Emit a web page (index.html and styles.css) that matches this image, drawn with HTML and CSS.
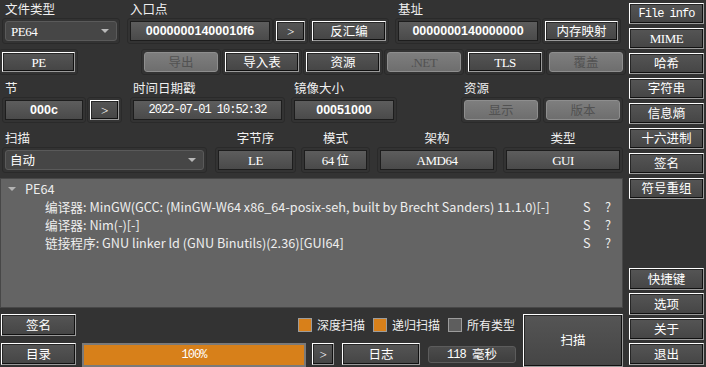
FILE: index.html
```html
<!DOCTYPE html>
<html><head><meta charset="utf-8"><link rel="stylesheet" href="styles.css"></head>
<body>
<div class="app">
  <div class="main">
    <div class="row row-a">
      <div class="col ml2"><div class="lbl">文件类型</div><div class="fr"><div class="combo w112"><span class="serif">PE64</span><span class="arrow"></span></div></div></div>
      <div class="col ml7"><div class="lbl">入口点</div><div class="fr"><div class="field num w140">00000001400010f6</div></div></div>
      <div class="fr"><div class="btn serif w29">&gt;</div></div>
      <div class="fr ml1"><div class="btn w74">反汇编</div></div>
      <div class="col ml6"><div class="lbl">基址</div><div class="fr"><div class="field num w140">0000000140000000</div></div></div>
      <div class="fr ml1"><div class="btn w73">内存映射</div></div>
    </div>
    <div class="row row-b">
      <div class="fr mlm1"><div class="btn serif w73">PE</div></div>
      <div class="fr ml63"><div class="btn dis w74">导出</div></div>
      <div class="fr ml1"><div class="btn w74">导入表</div></div>
      <div class="fr ml1"><div class="btn w74">资源</div></div>
      <div class="fr ml1"><div class="btn dis serif w74">.NET</div></div>
      <div class="fr ml1"><div class="btn serif w74">TLS</div></div>
      <div class="fr ml1"><div class="btn dis w74">覆盖</div></div>
    </div>
    <div class="row row-c">
      <div class="col ml2"><div class="lbl">节</div><div class="fr"><div class="field num w78">000c</div></div></div>
      <div class="fr ml1"><div class="btn serif w29">&gt;</div></div>
      <div class="col ml8"><div class="lbl">时间日期戳</div><div class="fr"><div class="field mono w149">2022-07-01 10:52:32</div></div></div>
      <div class="col ml6"><div class="lbl">镜像大小</div><div class="fr"><div class="field num w100">00051000</div></div></div>
      <div class="col ml64"><div class="lbl">资源</div>
        <div class="pair"><div class="fr"><div class="btn dis w74">显示</div></div><div class="fr ml2"><div class="btn dis w74">版本</div></div></div>
      </div>
    </div>
    <div class="row row-d">
      <div class="col ml2"><div class="lbl">扫描</div><div class="fr"><div class="combo w199"><span class="cjk">自动</span><span class="arrow"></span></div></div></div>
      <div class="col ml8"><div class="lbl c">字节序</div><div class="fr"><div class="field serif w75">LE</div></div></div>
      <div class="col ml5"><div class="lbl c">模式</div><div class="fr"><div class="field w63"><span class="serif">64&nbsp;</span><span class="cjk">位</span></div></div></div>
      <div class="col ml7"><div class="lbl c">架构</div><div class="fr"><div class="field serif w114">AMD64</div></div></div>
      <div class="col ml6"><div class="lbl c">类型</div><div class="fr"><div class="field serif w114">GUI</div></div></div>
    </div>
    <div class="tree">
      <div class="ti head"><span class="tri"></span><span class="tt">PE64</span></div>
      <div class="ti child"><span class="tt">编译器: MinGW(GCC: (MinGW-W64 x86_64-posix-seh, built by Brecht Sanders) 11.1.0)[-]</span><span class="s">S</span><span class="q">?</span></div>
      <div class="ti child"><span class="tt">编译器: Nim(-)[-]</span><span class="s">S</span><span class="q">?</span></div>
      <div class="ti child"><span class="tt">链接程序: GNU linker ld (GNU Binutils)(2.36)[GUI64]</span><span class="s">S</span><span class="q">?</span></div>
    </div>
    <div class="bottom">
      <div class="bl">
        <div class="brow r1">
          <div class="btn bb w75">签名</div>
          <div class="checks">
            <span class="cb on"></span><span class="ct">深度扫描</span>
            <span class="cb on"></span><span class="ct">递归扫描</span>
            <span class="cb"></span><span class="ct">所有类型</span>
          </div>
        </div>
        <div class="brow r2">
          <div class="btn bb w75">目录</div>
          <div class="prog"><span class="mono">100%</span></div>
          <div class="btn bb serif w22">&gt;</div>
          <div class="btn bb w78 ml8">日志</div>
          <div class="timer"><span class="mono">118&nbsp;</span><span class="cjk">毫秒</span></div>
        </div>
      </div>
      <div class="btn scan">扫描</div>
    </div>
  </div>
  <div class="side">
    <div class="btn sb mono">File info</div>
    <div class="btn sb serif">MIME</div>
    <div class="btn sb">哈希</div>
    <div class="btn sb">字符串</div>
    <div class="btn sb">信息熵</div>
    <div class="btn sb">十六进制</div>
    <div class="btn sb">签名</div>
    <div class="btn sb">符号重组</div>
    <div class="sgroup">
      <div class="btn sb tall">快捷键</div>
      <div class="btn sb tall">选项</div>
      <div class="btn sb tall">关于</div>
      <div class="btn sb tall">退出</div>
    </div>
  </div>
</div>
</body></html>
```

FILE: styles.css
```css
*{box-sizing:border-box;margin:0;padding:0}
html,body{width:706px;height:367px;overflow:hidden}
body{background:#333333;color:#ececec;font-family:"Noto Sans CJK SC","Noto Sans",sans-serif;font-size:12px;line-height:1}
.app{display:flex;height:367px}
.main{width:626px;flex:none}
.side{width:80px;flex:none;padding:3px 0 2px 3px;display:flex;flex-direction:column}

.row{display:flex;align-items:flex-end}
.col{display:flex;flex-direction:column}
.pair{display:flex}
.lbl{height:18px;line-height:18px;padding-left:3px;white-space:nowrap;color:#f0f0f0;font-size:12.5px}
.lbl.c{text-align:center;padding-left:0}

.row-b{margin-top:5px}
.row-c{margin-top:4px}
.row-d{margin-top:6px}

.ml1{margin-left:1px}.ml2{margin-left:2px}.ml5{margin-left:5px}.ml6{margin-left:6px}.ml7{margin-left:7px}.ml8{margin-left:8px}
.ml63{margin-left:63px}.ml64{margin-left:64px}.mlm1{margin-left:-1px}
.w22{width:22px}.w29{width:29px}.w63{width:63px}.w73{width:73px}.w74{width:74px}.w75{width:75px}.w78{width:78px}
.w100{width:100px}.w112{width:112px}.w114{width:114px}.w140{width:140px}.w149{width:149px}.w199{width:199px}

.fr{border:1px solid #2a2a2a;border-radius:3px;padding:2px;display:flex}

.btn{height:20px;display:flex;align-items:center;justify-content:center;white-space:nowrap;flex:none;
  background:linear-gradient(#555555,#454545);border:1px solid;border-color:#ffffff #9a9a9a #9a9a9a #ffffff;
  box-shadow:inset -1px -1px 0 #111111,inset 1px 1px 0 #262626;color:#ffffff;font-size:12.5px}
.btn.dis{border:1px solid #8e8e8e;border-radius:3px;background:linear-gradient(#7e7e7e,#6e6e6e);color:#525252;box-shadow:none}

.field{height:20px;border:1px solid #1d1d1d;background:linear-gradient(#5d5d5d,#4a4a4a);display:flex;align-items:center;justify-content:center;color:#ffffff;white-space:nowrap}
.num{font-family:"Liberation Sans",sans-serif;font-weight:bold;font-size:12.5px}
.mono{font-family:"Liberation Mono",monospace;font-size:12px;letter-spacing:-1px;font-weight:normal}
.serif{font-family:"Liberation Serif",serif;font-size:13px;letter-spacing:-0.5px}
.cjk{font-family:"Noto Sans CJK SC",sans-serif;letter-spacing:0;font-size:12.5px}

.combo{height:20px;border:1px solid #5a5a5a;border-radius:3px;background:#464646;display:flex;align-items:center;justify-content:space-between;padding:0 7px 0 5px;color:#fff}
.combo .cjk{margin-left:-1px}
.arrow{width:0;height:0;border-left:4px solid transparent;border-right:4px solid transparent;border-top:4px solid #b8b8b8}

.tree{margin-top:5px;width:623px;height:130px;background:#646464;border:1px solid #474747;padding-top:1px;color:#eeeeee;font-size:12.7px}
.ti{height:18px;display:flex;align-items:center;white-space:nowrap}
.ti .tt{flex:1}
.head{padding-left:7px}
.tri{width:0;height:0;border-left:4px solid transparent;border-right:4px solid transparent;border-top:4px solid #b4b4b4;margin-right:9px}
.child{padding-left:44px}
.s{width:22px}
.q{width:17px}

.bottom{margin-top:6px;display:flex}
.bl{width:523px;flex:none}
.brow{display:flex;align-items:center}
.r1{height:22px}
.r2{height:22px;margin-top:7px;align-items:flex-start}
.bb{height:22px}
.r1 .bb,.r2 .bb:first-child{margin-left:1px}
.checks{display:flex;align-items:center;margin-left:222px;flex:none;white-space:nowrap}
.cb{width:14px;height:14px;border:1px solid #9c9c9c;background:#5e5e5e;margin-right:5px;flex:none}
.cb.on{background:#d8801a}
.ct{margin-right:8px;color:#f0f0f0;font-size:12px;white-space:nowrap;flex:none}
.prog{margin-left:6px;width:224px;height:24px;border:2px solid #7a7a7a;background:#d7801a;display:flex;align-items:center;justify-content:center;color:#fff;flex:none}
.prog .mono{font-size:12px;letter-spacing:-1px}
.r2 .w22{margin-left:6px}
.timer{margin-left:8px;margin-top:3px;width:88px;height:17px;border:1px solid #5c5c5c;border-radius:3px;background:linear-gradient(#4c4c4c,#3e3e3e);display:flex;align-items:center;justify-content:center;color:#fff;flex:none}
.scan{width:100px;height:53px}

.sb{width:75px;height:21px;margin-bottom:4px;flex:none}
.sb.tall{height:22px;margin-bottom:3px}
.sgroup{margin-top:auto}
.sgroup .sb:last-child{margin-bottom:0}
```
